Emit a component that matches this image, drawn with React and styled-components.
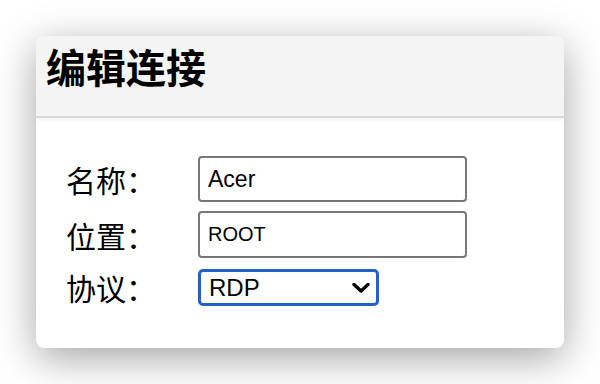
import React from "react";
import styled, { createGlobalStyle } from "styled-components";

const GlobalStyle = createGlobalStyle`
  html, body {
    margin: 0;
    padding: 0;
    background: #fff;
  }
  body {
    font-family: "Liberation Sans", "Noto Sans CJK SC", sans-serif;
  }
`;

function Chevron() {
  return (
    <svg width="18" height="11" viewBox="0 0 18 11" aria-hidden="true">
      <path
        d="M2 2 L9 8.5 L16 2"
        fill="none"
        stroke="#000"
        strokeWidth="3.4"
        strokeLinecap="round"
        strokeLinejoin="round"
      />
    </svg>
  );
}

function App() {
  return (
    <Page>
      <GlobalStyle />
      <Dialog>
        <Header>
          <h1>编辑连接</h1>
        </Header>
        <Form>
          <Label>名称：</Label>
          <TextInput defaultValue="Acer" $size={23} $height={46} />
          <Label>位置：</Label>
          <TextInput defaultValue="ROOT" $size={20} $height={47} />
          <Label>协议：</Label>
          <SelectBox>
            <select defaultValue="RDP">
              <option>RDP</option>
              <option>VNC</option>
              <option>SSH</option>
            </select>
            <ChevronSlot>
              <Chevron />
            </ChevronSlot>
          </SelectBox>
        </Form>
      </Dialog>
    </Page>
  );
}

const Page = styled.div`
  width: 600px;
  height: 384px;
  padding: 36px;
  box-sizing: border-box;
`;

const Dialog = styled.div`
  width: 528px;
  height: 312px;
  background: #fff;
  border-radius: 8px;
  overflow: hidden;
  box-shadow: 0 10px 40px rgba(0, 0, 0, 0.36);
`;

const Header = styled.div`
  height: 70px;
  background: #f4f4f4;
  border-bottom: 2px solid #d8d8d8;
  box-shadow: 0 2px 4px rgba(0, 0, 0, 0.06);
  padding: 10px 0 0 10px;

  h1 {
    margin: 0;
    font-family: "Noto Sans CJK SC", sans-serif;
    font-size: 40px;
    font-weight: 700;
    color: #000;
    line-height: 40px;
  }
`;

const Form = styled.div`
  display: grid;
  grid-template-columns: 132px auto;
  row-gap: 9px;
  align-items: center;
  justify-items: start;
  padding: 38px 0 0 30px;
`;

const Label = styled.span`
  font-family: "Noto Sans CJK SC", sans-serif;
  font-size: 30px;
  color: #000;
  line-height: 1;
`;

const TextInput = styled.input`
  width: 269px;
  height: ${(p) => p.$height}px;
  box-sizing: border-box;
  border: 2px solid #777;
  border-radius: 4px;
  padding: 0 8px;
  font-family: "Liberation Sans", sans-serif;
  font-size: ${(p) => p.$size}px;
  color: #000;
  background: #fff;
  outline: none;
`;

const SelectBox = styled.div`
  position: relative;
  width: 181px;
  height: 37px;
  box-sizing: border-box;
  border: 3px solid #2261c6;
  border-radius: 5px;
  margin-top: 2px;
  background: #fff;

  select {
    appearance: none;
    -webkit-appearance: none;
    width: 100%;
    height: 100%;
    border: none;
    outline: none;
    background: transparent;
    padding: 0 0 0 8px;
    font-family: "Liberation Sans", sans-serif;
    font-size: 24px;
    color: #000;
  }
`;

const ChevronSlot = styled.span`
  position: absolute;
  right: 6px;
  top: 50%;
  transform: translateY(-50%);
  display: flex;
  pointer-events: none;
`;

export default App;
